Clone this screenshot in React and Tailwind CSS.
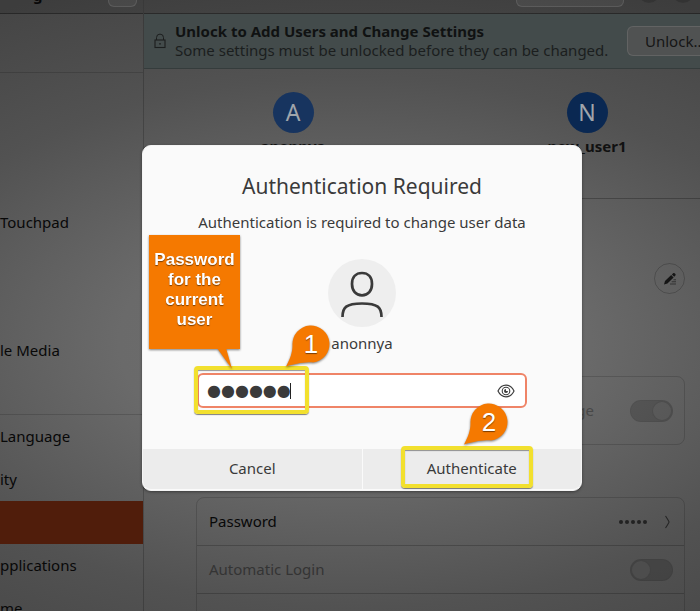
import { useState } from 'react'

const topItems = ['', '', '', 'Touchpad', '', '', 'le Media', '']
const bottomItems = [
  { label: 'Language' },
  { label: 'ity' },
  { label: '', active: true },
  { label: 'pplications' },
  { label: 'me' },
]

const users = [
  { initial: 'A', name: 'anonnya', color: 'bg-[#17345f]' },
  { initial: 'N', name: 'new_user1', color: 'bg-[#0a2852]' },
]

function LockIcon() {
  return (
    <svg width="12" height="16" viewBox="0 0 12 16" fill="none" stroke="#1c1e1e" className="shrink-0">
      <rect x="1" y="7" width="10" height="7.5" strokeWidth="1.1" />
      <path d="M2.5 7V4.6a3.5 3.5 0 0 1 7 0V7" strokeWidth="1" />
      <rect x="5.3" y="10" width="1.4" height="1.6" fill="#1c1e1e" stroke="none" />
    </svg>
  )
}

function PencilIcon() {
  return (
    <svg width="14" height="14" viewBox="0 0 14 14" fill="#151515">
      <path d="M1 12.6l1-3.5 6.2-6 2.4 2.5-6.2 6z" />
      <path d="M8.9 2.4l1.2-1.2c.5-.4 1-.4 1.4 0l.9.9c.4.4.4.9 0 1.3l-1.2 1.3z" />
      <path d="M10.5 7.2h2.5v1h-2.5zM8.7 9.3h4.3v1H8.700zM7 11.400h6v1H7z" opacity="0.6" />
    </svg>
  )
}

function PersonIcon() {
  return (
    <svg width="68" height="68" viewBox="0 0 68 68" fill="none" stroke="#3a3a3a" strokeWidth="2.7">
      <path d="M34 14c6.2 0 10 4.3 10 11s-3.8 11.3-10 11.3-10-4.6-10-11.3 3.800-11 10-11z" />
      <path d="M14.5 58c0-9.500 3.500-13.500 19.500-13.500s19.500 4 19.500 13.500" />
    </svg>
  )
}

function EyeIcon() {
  return (
    <svg width="18" height="14" viewBox="0 0 18 14" fill="none" stroke="#3d3d3d">
      <path d="M1 7c1.8-3.8 4.6-5.8 8-5.8s6.2 2 8 5.8c-1.8 3.800-4.600 5.800-8 5.800s-6.200-2-8-5.800z" strokeWidth="1.2" />
      <circle cx="9" cy="7" r="3.8" strokeWidth="1.1" />
      <path d="M9 5v2h2a2 2 0 1 1-2-2z" fill="#3d3d3d" stroke="none" />
    </svg>
  )
}

function Toggle({ label, on = false }) {
  return (
    <label className="relative block w-[43px] h-[22px] shrink-0">
      <input type="checkbox" disabled defaultChecked={on} aria-label={label} className="peer appearance-none block w-full h-full rounded-full bg-black/15 border border-black/5" />
      <span className="absolute top-px left-px size-5 rounded-full border border-black/15 bg-white/5 peer-checked:left-[22px]" />
    </label>
  )
}

function Sidebar() {
  return (
    <aside className="w-36 shrink-0 border-r border-black/20 text-[15px] text-[#080808]">
      <div className="flex items-end justify-between h-[14px] pl-[33px] pr-1.5 overflow-hidden bg-black/10 border-b border-black/35">
        <span className="font-bold leading-5 pb-2">g</span>
        <button aria-label="Menu" className="w-[29px] h-7 mb-1.5 rounded-md border border-white/10 bg-white/5" />
      </div>
      <div className="h-[59px] border-b border-black/15" />
      <nav>
        <div className="grid grid-rows-8 h-[342px] border-b border-black/15">
          {topItems.map((label, i) => (
            <div key={i} className="flex items-center">
              {label && <a href="#">{label}</a>}
            </div>
          ))}
        </div>
        {bottomItems.map((item, i) => (
          <div key={i} className={`flex items-center h-[43px] ${item.active ? 'bg-[#501d0b]' : ''}`}>
            {item.label && <a href="#">{item.label}</a>}
          </div>
        ))}
      </nav>
    </aside>
  )
}

function UsersPanel() {
  return (
    <main className="flex-1 min-w-0 flex flex-col text-[15px]">
      <div className="flex items-end justify-end gap-3 h-[14px] shrink-0 overflow-hidden bg-black/10 border-b border-black/35">
        <button aria-label="Search" className="w-[108px] h-7 mb-1.5 mr-0.5 rounded-md border border-white/10 bg-white/5" />
        <button aria-label="Minimize" className="size-[22px] mb-2.5 rounded-full bg-black/15" />
        <button aria-label="Maximize" className="size-[22px] mb-2.5 mr-1.5 rounded-full bg-black/15" />
      </div>

      <div className="flex items-center h-[55px] shrink-0 pl-2.5 bg-[#434b4b] border-b border-black/20 text-[#1b1e1e] overflow-hidden">
        <LockIcon />
        <div className="w-[452px] shrink-0 ml-[9px] leading-[19px] whitespace-nowrap">
          <p className="font-bold text-[#101212]">Unlock to Add Users and Change Settings</p>
          <p>Some settings must be unlocked before they can be changed.</p>
        </div>
        <button className="shrink-0 w-[92px] h-[30px] pl-[17px] text-left rounded-md border border-white/10 bg-[#505252] text-[#151515]">Unlock…</button>
      </div>

      <div className="flex h-[130px] shrink-0 pt-[23px] pl-0.5 border-b border-black/25">
        {users.map((user) => (
          <div key={user.name} className="w-[294px] shrink-0 flex flex-col items-center">
            <div className={`size-[41px] rounded-full flex items-center justify-center text-[23px] text-[#a0a5ab] ${user.color}`}>{user.initial}</div>
            <p className="mt-[3px] leading-5 font-bold text-[#111]">{user.name}</p>
          </div>
        ))}
      </div>

      <div className="pl-[52px] pr-[15px]">
        <div className="flex justify-end pt-16">
          <button aria-label="Edit name" className="size-[31px] rounded-full flex items-center justify-center border border-black/20">
            <PencilIcon />
          </button>
        </div>
        <div className="flex items-center justify-end h-[69px] mt-[82px] pr-[11px] rounded-lg border border-black/15">
          <span className="mr-9 text-[#484848]">ge</span>
          <Toggle label="Account option" on />
        </div>
        <div className="mt-[52px] rounded-lg border border-black/15">
          <div className="flex items-center h-12 pl-3 pr-3 border-b border-black/20">
            <span className="flex-1 text-[#080808]">Password</span>
            <span className="flex gap-0.5 mr-4">
              {[0, 1, 2, 3, 4].map((i) => (
                <i key={i} className="size-1 rounded-full bg-[#222]" />
              ))}
            </span>
            <svg width="9" height="14" viewBox="0 0 9 14" fill="none" stroke="#252525" strokeWidth="1.1">
              <path d="M2.5 1c3 4.5 3.5 5.2 3.500 6s-.5 1.500-3.500 6" />
            </svg>
          </div>
          <div className="flex items-center justify-between h-12 pl-3 pr-[11px] border-b border-black/20">
            <span className="text-[#343434]">Automatic Login</span>
            <Toggle label="Automatic Login" />
          </div>
          <div className="h-12" />
        </div>
      </div>
    </main>
  )
}

function NumberPin({ number, className }) {
  return (
    <div className={`absolute w-[44px] h-[42px] font-['Liberation_Sans',sans-serif] ${className}`}>
      <svg width="44" height="42" viewBox="0 0 44 42" className="absolute inset-0 drop-shadow-[0_1px_1px_rgba(0,0,0,0.5)]">
        <path d="M6.5 20A18.5 18.5 0 1 1 27 37.4C20 37.2 12 38 0 41.5C4 34 6.5 28 6.5 20z" fill="#f57900" />
      </svg>
      <span className="relative block pl-[6px] text-center text-[26px] leading-[38px] text-white [text-shadow:0_1px_1px_rgba(0,0,0,0.5)]">{number}</span>
    </div>
  )
}

function AuthDialog() {
  const [password, setPassword] = useState('●●●●●●')

  return (
    <div role="dialog" aria-label="Authentication Required" className="relative w-[440px] h-fit flex flex-col rounded-[9px] bg-[#fafafa] text-[#3a3a3a] text-[15px] border border-[#f4f4f4] shadow-[0_1px_3px_rgba(0,0,0,0.4)]">
      <div className="flex flex-col items-center px-[54px] pt-[26px]">
        <h1 className="text-[21px] leading-7">Authentication Required</h1>
        <p className="mt-2.5 leading-6 whitespace-nowrap">Authentication is required to change user data</p>
        <div className="mt-[25px] size-[68px] rounded-full bg-[#eeeeee]">
          <PersonIcon />
        </div>
        <p className="mt-1 leading-6">anonnya</p>
        <div className="flex items-center w-full h-[35px] mt-[18px] pl-2 pr-2.5 rounded-md bg-white border-2 border-[#ef8467]">
          <input
            type="text"
            autoComplete="off"
            aria-label="Password"
            value={password}
            onChange={(e) => setPassword(e.target.value)}
            className="w-[83px] h-6 outline-none text-[16px] font-['DejaVu_Sans',sans-serif]"
          />
          <span className="w-px h-4 bg-[#222]" />
          <button aria-label="Show password" className="ml-auto">
            <EyeIcon />
          </button>
        </div>
      </div>

      <div className="flex gap-px mt-[41px] mb-px">
        <button className="flex-1 h-10 pb-0.5 rounded-bl-[8px] bg-[#ececec]">Cancel</button>
        <button className="flex-1 h-10 pb-0.5 rounded-br-[8px] bg-[#ececec]">Authenticate</button>
      </div>

      <div className="absolute left-[51px] top-[220px] w-[115px] h-[48px] rounded-[4px] border-4 border-[#f2e02e] shadow-[0_1px_1px_rgba(0,0,0,0.5),inset_0_1px_1px_rgba(0,0,0,0.4)]" />
      <div className="absolute left-[258px] top-[300px] w-[132px] h-[42px] rounded-[4px] border-4 border-[#f2e02e] shadow-[0_1px_1px_rgba(0,0,0,0.5),inset_0_1px_1px_rgba(0,0,0,0.4)]" />

      <div className="absolute left-1.5 top-[89px] w-[91px] h-[114px] pb-1 flex items-center justify-center bg-[#f57900] font-['Liberation_Sans',sans-serif] font-bold text-[17px] leading-5 text-center text-white [text-shadow:0_1px_1px_rgba(0,0,0,0.5)] drop-shadow-[0_1px_1px_rgba(0,0,0,0.5)]">
        <svg width="16" height="22" viewBox="0 0 16 22" className="absolute left-[68px] top-[113px]">
          <path d="M0 0h9l6 21z" fill="#f57900" />
        </svg>
        <p>Password for the current user</p>
      </div>
      <NumberPin number="1" className="left-[143px] top-[179px]" />
      <NumberPin number="2" className="left-[321px] top-[257px]" />
    </div>
  )
}

export default function App() {
  return (
    <div className="relative flex h-screen overflow-hidden font-['Noto_Sans',sans-serif] bg-[radial-gradient(ellipse_110%_70%_at_50%_56%,#707070_0%,#6a6a6a_30%,#525252_62%,#454545_90%)]">
      <Sidebar />
      <UsersPanel />
      <div className="absolute inset-0 flex justify-center pl-6 pt-[145px]">
        <AuthDialog />
      </div>
    </div>
  )
}
